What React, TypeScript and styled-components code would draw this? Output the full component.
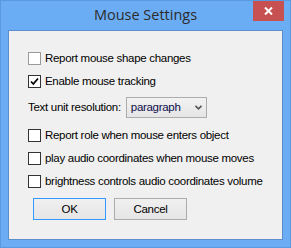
import styled, { createGlobalStyle } from "styled-components";

const GlobalStyle = createGlobalStyle`
  html, body {
    margin: 0;
    padding: 0;
    background: #6badf5;
  }
  * {
    box-sizing: border-box;
  }
`;

const Frame = styled.div`
  width: 291px;
  height: 248px;
  background: #6badf5;
  border: 1px solid #5a98e0;
  display: flex;
  flex-direction: column;
  font-family: "Liberation Sans", Arial, sans-serif;
`;

const TitleBar = styled.div`
  height: 29px;
  display: flex;
  align-items: flex-start;
  position: relative;
`;

const Title = styled.div`
  flex: 1;
  text-align: center;
  font-family: "Open Sans", "Liberation Sans", sans-serif;
  font-size: 14.5px;
  color: #2b2b2b;
  line-height: 28px;
`;

const CloseButton = styled.div`
  position: absolute;
  right: 6px;
  top: 0;
  width: 31px;
  height: 20px;
  background: #c75050;
  color: #fff;
  display: flex;
  align-items: center;
  justify-content: center;
`;

const Client = styled.div`
  margin: 0 7px 7px 7px;
  flex: 1;
  background: #f0f0f0;
  border: 1px solid #5b8fcc;
  padding-left: 19px;
  display: flex;
  flex-direction: column;
  font-size: 11.5px;
  letter-spacing: -0.3px;
  color: #000;
`;

const Row = styled.div<{ $top: number }>`
  margin-top: ${({ $top }) => $top}px;
  display: flex;
  align-items: center;
  gap: 4px;
  height: 13px;
  white-space: nowrap;
`;

const Box = styled.span<{ $faded?: boolean }>`
  width: 13px;
  height: 13px;
  border: 1px solid ${({ $faded }) => ($faded ? "#9a9a9a" : "#333")};
  background: #fff;
  display: flex;
  align-items: center;
  justify-content: center;
  flex-shrink: 0;
`;

const Label = styled.span`
  line-height: 13px;
`;

const SelectRow = styled.div<{ $top: number }>`
  margin-top: ${({ $top }) => $top}px;
  display: flex;
  align-items: center;
  gap: 5px;
  height: 20px;
`;

const Select = styled.div`
  width: 81px;
  height: 21px;
  border: 1px solid #acacac;
  background: linear-gradient(#f2f2f2, #e5e5e5);
  display: flex;
  align-items: center;
  justify-content: space-between;
  padding: 0 4px 0 4px;
  color: #0c0c4a;
`;

const ButtonRow = styled.div<{ $top: number }>`
  margin-top: ${({ $top }) => $top}px;
  margin-left: 5px;
  display: flex;
  gap: 8px;
`;

const Button = styled.div<{ $default?: boolean }>`
  width: 73px;
  height: 22px;
  border: 1px solid ${({ $default }) => ($default ? "#3399ff" : "#acacac")};
  background: linear-gradient(#f0f0f0, #e5e5e5);
  display: flex;
  align-items: center;
  justify-content: center;
  color: #000;
`;

function Check({ checked, faded }: { checked?: boolean; faded?: boolean }) {
  return (
    <Box $faded={faded}>
      {checked && (
        <svg width="9" height="9" viewBox="0 0 9 9">
          <path d="M1 4.5 L3.3 7 L8 1.5" fill="none" stroke="#000" strokeWidth="1.8" />
        </svg>
      )}
    </Box>
  );
}

export default function App() {
  return (
    <>
      <GlobalStyle />
      <Frame>
        <TitleBar>
          <Title>Mouse Settings</Title>
          <CloseButton>
            <svg width="9" height="8" viewBox="0 0 9 8">
              <path d="M1 0.5 L8 7.5 M8 0.5 L1 7.5" stroke="#fff" strokeWidth="2" />
            </svg>
          </CloseButton>
        </TitleBar>
        <Client>
          <Row $top={21}>
            <Check faded />
            <Label>Report mouse shape changes</Label>
          </Row>
          <Row $top={10}>
            <Check checked />
            <Label>Enable mouse tracking</Label>
          </Row>
          <SelectRow $top={9}>
            <Label>Text unit resolution:</Label>
            <Select>
              <span>paragraph</span>
              <svg width="7" height="5" viewBox="0 0 7 5">
                <path d="M0.5 0.8 L3.5 3.8 L6.5 0.8" fill="none" stroke="#555" strokeWidth="1.6" />
              </svg>
            </Select>
          </SelectRow>
          <Row $top={12}>
            <Check />
            <Label>Report role when mouse enters object</Label>
          </Row>
          <Row $top={10}>
            <Check />
            <Label>play audio coordinates when mouse moves</Label>
          </Row>
          <Row $top={10}>
            <Check />
            <Label>brightness controls audio coordinates volume</Label>
          </Row>
          <ButtonRow $top={10}>
            <Button $default>OK</Button>
            <Button>Cancel</Button>
          </ButtonRow>
        </Client>
      </Frame>
    </>
  );
}
